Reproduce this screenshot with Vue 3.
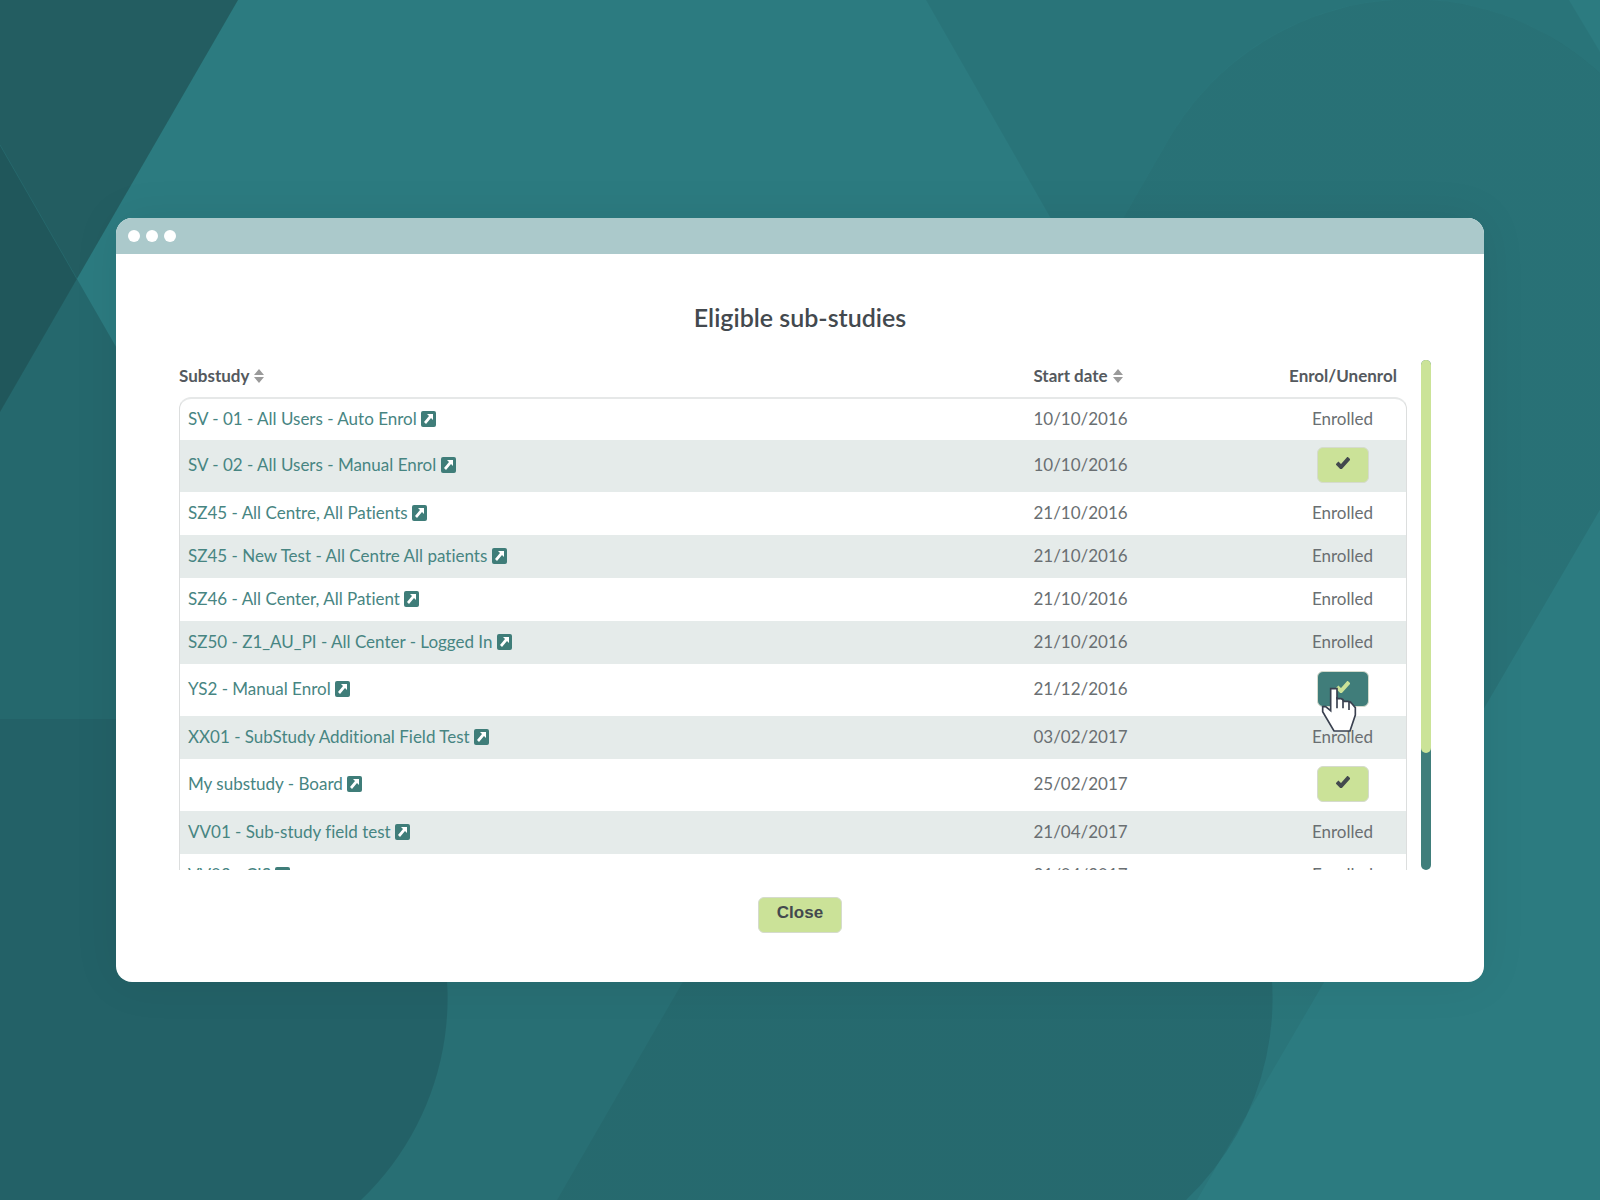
<template>
  <div class="stage">
    <svg class="backdrop" viewBox="0 0 1600 1200" preserveAspectRatio="xMidYMid slice" aria-hidden="true">
      <defs>
        <linearGradient id="band" gradientUnits="userSpaceOnUse" x1="1500" y1="500" x2="1200" y2="1000">
          <stop offset="0" stop-opacity="0.08" />
          <stop offset="1" stop-opacity="0.05" />
        </linearGradient>
      </defs>
      <rect width="1600" height="1200" fill="#2c7b80" />
      <path class="shape-left" d="M0 145 410 858A279 279 0 0 1 361 1200H0Z" />
      <path class="shape-floor" d="M0 719H994A279 279 0 0 1 1186 1200H0Z" />
      <path fill="url(#band)" d="M557 1200 1169 139A279 279 0 0 1 1653 419L1197 1200Z" />
      <path class="shape-top" d="M926 0 1054 224H1120L1169 139A279 279 0 0 1 1653 140L1569 0Z" />
      <path class="shape-corner" d="M0 0H238L0 412Z" />
      <path class="shape-edge" d="M0 145 77 279" />
    </svg>

    <main class="window">
      <div class="titlebar">
        <span class="dot"></span>
        <span class="dot"></span>
        <span class="dot"></span>
      </div>

      <h1 class="title">Eligible sub-studies</h1>

      <div class="scroller">
        <div class="viewport">
          <table class="table">
            <thead>
              <tr>
                <th class="col-name">
                  <button type="button" class="sort" @click="sortBy('name')">
                    Substudy
                    <svg class="sort-icon" viewBox="0 0 10 14"><path d="M5 0 10 6H0ZM5 14 0 8H10Z" /></svg>
                  </button>
                </th>
                <th class="col-date">
                  <button type="button" class="sort" @click="sortBy('date')">
                    Start date
                    <svg class="sort-icon" viewBox="0 0 10 14"><path d="M5 0 10 6H0ZM5 14 0 8H10Z" /></svg>
                  </button>
                </th>
                <th class="col-action">Enrol/Unenrol</th>
              </tr>
            </thead>
            <tbody>
              <tr v-for="s in sorted" :key="s.name">
                <td>
                  <a href="#" class="link" @click.prevent>
                    {{ s.name }}
                    <svg class="link-icon" viewBox="0 0 15 16">
                      <rect width="15" height="16" rx="2" />
                      <path d="M6 3H12V9L10 7 5 13 3 11 8 5Z" />
                    </svg>
                  </a>
                </td>
                <td>{{ s.date }}</td>
                <td class="col-action">
                  <span v-if="s.enrolled">Enrolled</span>
                  <div v-else class="action">
                    <button
                      type="button"
                      class="btn enrol"
                      :class="{ active: s.active }"
                      aria-label="Enrol"
                      @click="s.enrolled = true"
                    >
                      <svg class="check" viewBox="0 0 14 12"><path d="M1 6 5 10 13 1" /></svg>
                    </button>
                    <svg v-if="s.active" class="pointer" viewBox="0 0 108 135" aria-hidden="true">
                      <path d="M29 5H48V35H60Q66 36 69 43H82Q89 44 93 50L103 62V84L87 132H39L5 74V59H14L29 71Z" />
                      <path d="M48 30V64M66 38V64M84 44V69" />
                    </svg>
                  </div>
                </td>
              </tr>
            </tbody>
          </table>
        </div>
        <div class="track">
          <div class="thumb"></div>
        </div>
      </div>

      <div class="footer">
        <button type="button" class="btn close">Close</button>
      </div>
    </main>
  </div>
</template>

<script setup>
import { computed, ref } from 'vue';

const substudies = ref([
  { name: 'SV - 01 - All Users - Auto Enrol', date: '10/10/2016', enrolled: true },
  { name: 'SV - 02 - All Users - Manual Enrol', date: '10/10/2016', enrolled: false },
  { name: 'SZ45 - All Centre, All Patients', date: '21/10/2016', enrolled: true },
  { name: 'SZ45 - New Test - All Centre All patients', date: '21/10/2016', enrolled: true },
  { name: 'SZ46 - All Center, All Patient', date: '21/10/2016', enrolled: true },
  { name: 'SZ50 - Z1_AU_PI - All Center - Logged In', date: '21/10/2016', enrolled: true },
  { name: 'YS2 - Manual Enrol', date: '21/12/2016', enrolled: false, active: true },
  { name: 'XX01 - SubStudy Additional Field Test', date: '03/02/2017', enrolled: true },
  { name: 'My substudy - Board', date: '25/02/2017', enrolled: false },
  { name: 'VV01 - Sub-study field test', date: '21/04/2017', enrolled: true },
  { name: 'VV02 - CIS', date: '21/04/2017', enrolled: true },
]);

const sortKey = ref('');

function sortBy(key) {
  sortKey.value = key;
}

function sortValue(s) {
  if (sortKey.value === 'name') return s.name;
  return s.date.split('/').reverse().join('-');
}

const sorted = computed(() => {
  if (!sortKey.value) return substudies.value;
  return [...substudies.value].sort((a, b) => sortValue(a).localeCompare(sortValue(b)));
});
</script>

<style>
body {
  margin: 0;
}
</style>

<style scoped>
.stage {
  position: relative;
  box-sizing: border-box;
  min-height: 100vh;
  padding: 40px 116px;
  display: flex;
  align-items: center;
  overflow: hidden;
  font-family: Lato, "Liberation Sans", sans-serif;
  font-size: 17px;
  font-variant-ligatures: none;
  color: #6a6f72;
}
.backdrop {
  position: absolute;
  inset: 0;
  width: 100%;
  height: 100%;
}
.shape-left {
  fill: #000;
  fill-opacity: 0.15;
}
.shape-floor {
  fill: #205458;
  fill-opacity: 0.3;
}
.shape-top {
  fill: #000;
  fill-opacity: 0.05;
}
.shape-corner {
  fill: #1f5052;
  fill-opacity: 0.68;
}
.shape-edge {
  stroke: #2c7b80;
  stroke-opacity: 0.4;
}
.window {
  position: relative;
  flex: 1;
  min-width: 0;
  background: #fff;
  border-radius: 16px;
  box-shadow: 0 0 48px rgba(0, 0, 0, 0.07);
  overflow: hidden;
}
.titlebar {
  display: flex;
  align-items: center;
  gap: 6px;
  height: 36px;
  padding: 0 12px;
  background: #abc9cb;
}
.dot {
  width: 12px;
  height: 12px;
  border-radius: 50%;
  background: #fff;
}
.title {
  margin: 45px 0 25px;
  font-size: 25px;
  line-height: 36px;
  font-weight: 600;
  text-align: center;
  color: #43494e;
}
.scroller {
  display: flex;
  gap: 14px;
  margin: 0 53px 0 63px;
}
.viewport {
  flex: 1;
  height: 510px;
  overflow: hidden;
}
.track {
  width: 10px;
  border-radius: 5px;
  background: #407e7b;
}
.thumb {
  height: 77%;
  border-radius: 5px;
  background: #cbe398;
}
.table {
  width: 100%;
  table-layout: fixed;
  border-collapse: separate;
  border-spacing: 0;
}
th {
  height: 37px;
  padding: 0 0 6px;
  box-sizing: border-box;
  text-align: left;
  font-weight: 700;
  line-height: 20px;
  color: #54595e;
}
.col-date {
  width: 20%;
}
.col-action {
  width: 128px;
  text-align: center;
}
.sort {
  display: flex;
  align-items: center;
  gap: 5px;
  padding: 0;
  border: 0;
  background: none;
  font: inherit;
  color: inherit;
  cursor: pointer;
}
.sort-icon {
  width: 10px;
  height: 14px;
  fill: #9a9a9a;
}
td {
  box-sizing: border-box;
  height: 43px;
  padding: 0 0 2px;
  line-height: 20px;
}
td:first-child {
  padding-left: 8px;
  border-left: 1px solid #dcdede;
}
td:last-child {
  border-right: 1px solid #dcdede;
}
tbody tr:first-child td {
  border-top: 2px solid #e6e8e8;
}
tbody tr:first-child td:first-child {
  border-top-left-radius: 12px;
}
tbody tr:first-child td:last-child {
  border-top-right-radius: 12px;
}
tbody tr:nth-child(even) td {
  background: #e5ebea;
}
.link {
  color: #478582;
  text-decoration: none;
}
.link-icon {
  width: 15px;
  height: 16px;
  vertical-align: -2px;
  fill: #3f7d79;
}
.link-icon path {
  fill: #fff;
}
.action {
  position: relative;
  width: 52px;
  margin: 7px auto;
}
.btn {
  display: block;
  box-sizing: border-box;
  height: 36px;
  padding: 0 0 4px;
  border: 1px solid #d5dbcd;
  border-radius: 6px;
  background: #cbe298;
  color: #43494e;
  cursor: pointer;
}
.enrol {
  width: 52px;
}
.enrol.active {
  background: #407d7a;
  color: #cbe298;
}
.check {
  display: block;
  width: 14px;
  height: 12px;
  margin: 0 auto;
  fill: none;
  stroke: currentColor;
  stroke-width: 4;
}
.pointer {
  position: absolute;
  z-index: 1;
  left: 4px;
  top: 16px;
  width: 36px;
  height: 45px;
  fill: #fff;
  stroke: #3a4150;
  stroke-width: 5;
  pointer-events: none;
}
.footer {
  display: flex;
  justify-content: center;
  padding: 27px 0 49px;
}
.close {
  width: 84px;
  font-family: "Liberation Sans", Arial, sans-serif;
  font-size: 17px;
  font-weight: 700;
}
</style>
